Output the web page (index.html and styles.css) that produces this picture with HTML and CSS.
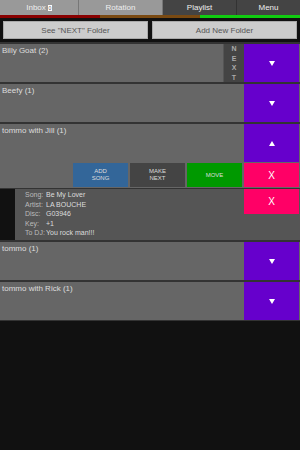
FILE: index.html
```html
<!DOCTYPE html>
<html lang="en">
<head>
    <meta charset="UTF-8">
    <meta name="viewport" content="width=device-width, initial-scale=1.0">
    <title>Playlist</title>
    <link rel="stylesheet" href="styles.css">
</head>
<body>

<!-- Tabs -->
<div class="tabs">
    <div class="tab tab-light">Inbox <span class="badge">0</span></div>
    <div class="tab tab-light tab-rotation">Rotation</div>
    <div class="tab tab-dark tab-playlist">Playlist</div>
    <div class="tab tab-dark tab-menu">Menu</div>
</div>
<div class="tab-line">
    <span class="line-red"></span>
    <span class="line-brown"></span>
    <span class="line-green"></span>
</div>

<!-- Folder actions -->
<div class="actions">
    <button class="action-btn">See "NEXT" Folder</button>
    <button class="action-btn">Add New Folder</button>
</div>

<!-- Folder list -->
<div class="folders">
    <div class="folder">
        <div class="folder-head">
            <div class="folder-name">Billy Goat (2)</div>
            <div class="next-tag"><span>N</span><span>E</span><span>X</span><span>T</span></div>
            <div class="toggle"><span class="arrow-down"></span></div>
        </div>
    </div>

    <div class="folder">
        <div class="folder-head">
            <div class="folder-name">Beefy (1)</div>
            <div class="toggle"><span class="arrow-down"></span></div>
        </div>
    </div>

    <div class="folder">
        <div class="folder-head">
            <div class="folder-name">tommo with Jill (1)</div>
            <div class="toggle"><span class="arrow-up"></span></div>
        </div>
        <div class="tools">
            <div class="tool tool-add">ADD<br>SONG</div>
            <div class="tool tool-next">MAKE<br>NEXT</div>
            <div class="tool tool-move">MOVE</div>
            <div class="tool tool-delete">X</div>
        </div>
        <div class="song">
            <div class="song-strip"></div>
            <div class="song-info">
                <div class="song-row"><span class="label">Song:</span><span>Be My Lover</span></div>
                <div class="song-row"><span class="label">Artist:</span><span>LA BOUCHE</span></div>
                <div class="song-row"><span class="label">Disc:</span><span>G03946</span></div>
                <div class="song-row"><span class="label">Key:</span><span>+1</span></div>
                <div class="song-row"><span class="label">To DJ:</span><span>You rock man!!!</span></div>
            </div>
            <div class="song-delete">X</div>
        </div>
    </div>

    <div class="folder">
        <div class="folder-head">
            <div class="folder-name">tommo (1)</div>
            <div class="toggle"><span class="arrow-down"></span></div>
        </div>
    </div>

    <div class="folder">
        <div class="folder-head">
            <div class="folder-name">tommo with Rick (1)</div>
            <div class="toggle"><span class="arrow-down"></span></div>
        </div>
    </div>
</div>

</body>
</html>
```

FILE: styles.css
```css
/* Global styling */
body {
    font-family: 'Liberation Sans', Arial, sans-serif;
    font-size: 8px;
    background-color: #111111;
    color: #dddddd;
    margin: 0;
    padding: 0;
}

/* Tabs */
.tabs {
    display: flex;
    height: 15px;
}

.tab {
    display: flex;
    align-items: center;
    justify-content: center;
    color: #eeeeee;
    font-size: 8px;
}

.tab-light {
    background-color: #999999;
    border-right: 1px solid #777777;
    width: 78px;
}

.tab-rotation {
    width: 83px;
}

.tab-dark {
    background-color: #444444;
    border-right: 1px solid #333333;
}

.tab-playlist {
    width: 73px;
}

.tab-menu {
    flex: 1;
    border-right: none;
}

.badge {
    display: inline-block;
    background-color: #ffffff;
    color: #555555;
    font-size: 5px;
    line-height: 6px;
    width: 4px;
    text-align: center;
    margin-left: 2px;
}

.tab-line {
    display: flex;
    height: 3px;
}

.tab-line span {
    flex: 1;
}

.line-red {
    background-color: #880000;
}

.line-brown {
    background-color: #7a4a12;
}

.line-green {
    background-color: #11cc11;
}

/* Folder actions */
.actions {
    display: flex;
    justify-content: space-between;
    padding: 3px;
}

.action-btn {
    width: 145px;
    height: 18px;
    background-color: #cccccc;
    border: 1px solid #aaaaaa;
    color: #555555;
    font-family: inherit;
    font-size: 8px;
    padding: 0;
}

/* Folder list */
.folder {
    background-color: #666666;
    border-top: 2px solid #333333;
}

.folder:last-child {
    border-bottom: 1px solid #333333;
}

.folder-head {
    display: flex;
    height: 38px;
}

.folder-name {
    flex: 1;
    padding: 2px 2px;
    color: #dddddd;
}

.next-tag {
    width: 20px;
    background-color: #444444;
    border-left: 1px solid #555555;
    display: flex;
    flex-direction: column;
    justify-content: space-around;
    align-items: center;
    font-size: 7px;
    font-weight: bold;
    color: #aaaaaa;
}

.toggle {
    width: 55px;
    margin-right: 1px;
    background-color: #6600cc;
    display: flex;
    align-items: center;
    justify-content: center;
}

.arrow-down {
    border-left: 3px solid transparent;
    border-right: 3px solid transparent;
    border-top: 5px solid #ffffff;
}

.arrow-up {
    border-left: 3px solid transparent;
    border-right: 3px solid transparent;
    border-bottom: 5px solid #ffffff;
}

/* Folder tools */
.tools {
    display: flex;
    justify-content: flex-end;
    gap: 2px;
    padding: 1px 1px 1px 0;
}

.tool {
    width: 55px;
    height: 24px;
    display: flex;
    align-items: center;
    justify-content: center;
    text-align: center;
    font-size: 6px;
    line-height: 7px;
    color: #dddddd;
}

.tool-add {
    background-color: #336699;
}

.tool-next {
    background-color: #444444;
}

.tool-move {
    background-color: #009900;
}

.tool-delete {
    background-color: #ff0066;
    font-size: 10px;
    color: #ffffff;
}

/* Song in folder */
.song {
    display: flex;
    height: 51px;
    background-color: #555555;
    border-top: 1px solid #333333;
}

.song-strip {
    width: 15px;
    background-color: #111111;
}

.song-info {
    flex: 1;
    padding: 1px 0 0 10px;
}

.song-row {
    display: flex;
    height: 9.6px;
    line-height: 9.6px;
    font-size: 7px;
    color: #dddddd;
}

.label {
    width: 21px;
    color: #bbbbbb;
}

.song-delete {
    width: 55px;
    height: 25px;
    margin-right: 1px;
    background-color: #ff0066;
    color: #ffffff;
    font-size: 10px;
    display: flex;
    align-items: center;
    justify-content: center;
}
```
